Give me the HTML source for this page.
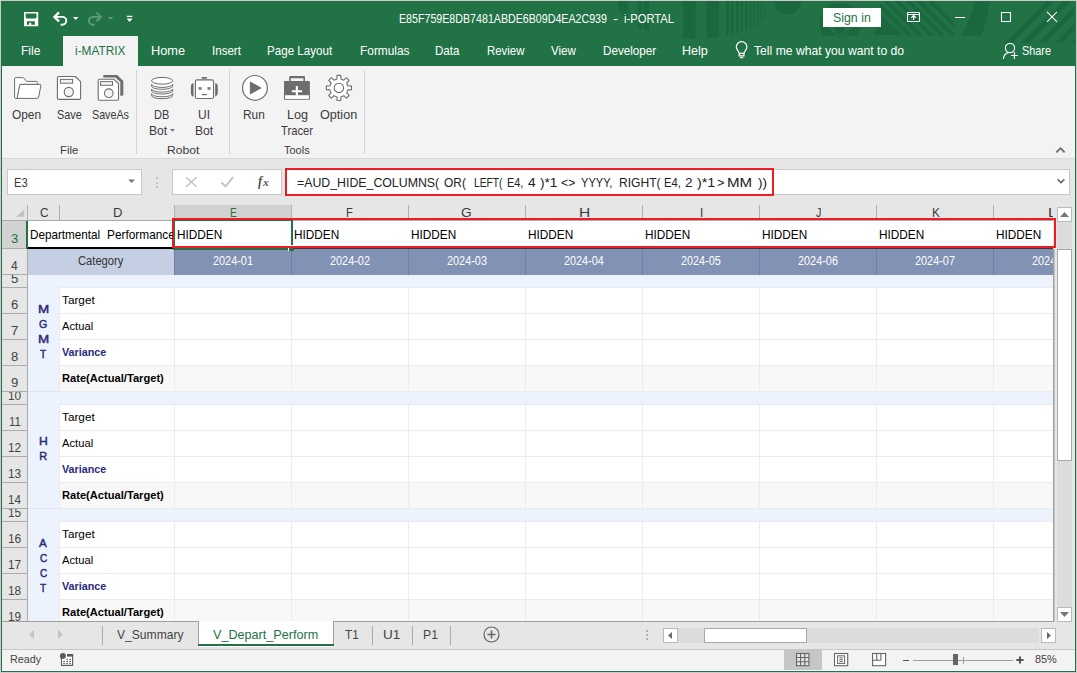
<!DOCTYPE html>
<html><head><meta charset="utf-8"><title>i-PORTAL</title>
<style>
html,body{margin:0;padding:0;}
body{width:1077px;height:673px;overflow:hidden;background:#cfcaca;font-family:"Liberation Sans", sans-serif;}
#w{position:absolute;left:0;top:0;width:1077px;height:673px;overflow:hidden;}
#w div{position:absolute;box-sizing:border-box;}
#w svg{position:absolute;overflow:visible;}
.t{position:absolute;white-space:pre;transform-origin:0 0;font-family:"Liberation Sans", sans-serif;}
</style></head><body><div id="w">
<div style="left:0px;top:0px;width:1077px;height:673px;background:#cfcaca;"></div>
<div style="left:1px;top:1px;width:1075px;height:671px;background:#217346;"></div>
<div style="left:2px;top:66px;width:1073px;height:92px;background:#f3f3f3;"></div>
<div style="left:2px;top:158px;width:1073px;height:464px;background:#e6e6e6;"></div>
<div style="left:2px;top:158px;width:1073px;height:1px;background:#d8d8d8;"></div>
<svg style="left:0;top:0" width="1077" height="46" viewBox="0 0 1077 46">
<defs><clipPath id="cpA"><ellipse cx="696" cy="1" rx="79" ry="38"/></clipPath>
<clipPath id="cpB"><rect x="2" y="1" width="1073" height="42"/></clipPath>
<clipPath id="cpE"><rect x="800" y="1" width="90" height="34.5"/></clipPath>
<clipPath id="cpC"><path d="M880 1H955V35.5H880Z"/></clipPath>
<clipPath id="cpD"><path d="M990 1H1075V43H990Z"/></clipPath></defs>
<g fill="#1b683e" clip-path="url(#cpB)">
<g clip-path="url(#cpA)"><rect x="618" y="0" width="9.5" height="44"/><rect x="637.7" y="0" width="4.099999999999909" height="44"/><rect x="643.5" y="0" width="5.5" height="44"/><rect x="683" y="0" width="12.5" height="44"/><rect x="706.3" y="0" width="12.600000000000023" height="44"/><rect x="726" y="0" width="3" height="44"/><rect x="731" y="0" width="2.7999999999999545" height="44"/><rect x="736" y="0" width="2.6000000000000227" height="44"/><rect x="740.7" y="0" width="2.2999999999999545" height="44"/><rect x="745.3" y="0" width="2.0" height="44"/><rect x="749.5" y="0" width="1.7000000000000455" height="44"/><rect x="753.3" y="0" width="1.7000000000000455" height="44"/><rect x="757" y="0" width="1.3999999999999773" height="44"/><rect x="760.5" y="0" width="1.1000000000000227" height="44"/><rect x="763.7" y="0" width="1.099999999999909" height="44"/></g>
<circle cx="787.5" cy="1" r="13.5"/>
<g clip-path="url(#cpE)"><circle cx="840" cy="23.5" r="16" fill="none" stroke="#1b683e" stroke-width="9"/>
<circle cx="840" cy="29" r="5"/></g>
<path d="M874 35L880 14L903 35Z"/>
<g clip-path="url(#cpC)"><path d="M871 0L915 44H921L877 0Z"/><path d="M882 0L926 44H932L888 0Z"/><path d="M893 0L937 44H943L899 0Z"/><path d="M904 0L948 44H954L910 0Z"/><path d="M915 0L959 44H965L921 0Z"/><path d="M926 0L970 44H976L932 0Z"/></g>
<path d="M974 1H989Q988 20 981 35.5H961Q972 18 974 1Z"/>
<g clip-path="url(#cpD)"><path d="M1003.7 44L1047.7 0H1055.0L1011.0 44Z"/><path d="M1020.4 44L1064.4 0H1071.7L1027.7 44Z"/><path d="M1037.1 44L1081.1 0H1088.4L1044.4 44Z"/><path d="M1053.8 44L1097.8 0H1105.1L1061.1 44Z"/><path d="M1070.5 44L1114.5 0H1121.8L1077.8 44Z"/></g>
</g></svg>
<div style="left:63px;top:36px;width:75px;height:31px;background:#f3f3f3;"></div>
<div style="left:823px;top:8px;width:58px;height:19px;background:#fff;"></div>
<div style="left:136px;top:70px;width:1px;height:84px;background:#d4d4d4;"></div>
<div style="left:229px;top:70px;width:1px;height:84px;background:#d4d4d4;"></div>
<div style="left:364px;top:70px;width:1px;height:84px;background:#d4d4d4;"></div>
<div style="left:7px;top:169px;width:135px;height:26px;background:#fff;border:1px solid #c8c8c8;"></div>
<div style="left:172px;top:169px;width:110px;height:26px;background:#fff;border:1px solid #c8c8c8;"></div>
<div style="left:286px;top:169px;width:784px;height:26px;background:#fff;border:1px solid #c8c8c8;"></div>
<div style="left:2px;top:205px;width:1052px;height:16px;background:#e6e6e6;"></div>
<div style="left:2px;top:220px;width:1052px;height:1px;background:#ababab;"></div>
<div style="left:27px;top:205px;width:1px;height:16px;background:#b0b0b0;"></div>
<div style="left:175px;top:205px;width:117px;height:15px;background:#d2d2d2;"></div>
<div style="left:175px;top:220px;width:117px;height:1px;background:#217346;"></div>
<div style="left:59px;top:205px;width:1px;height:15px;background:#b0b0b0;"></div>
<div style="left:174px;top:205px;width:1px;height:15px;background:#b0b0b0;"></div>
<div style="left:291px;top:205px;width:1px;height:15px;background:#b0b0b0;"></div>
<div style="left:408px;top:205px;width:1px;height:15px;background:#b0b0b0;"></div>
<div style="left:525px;top:205px;width:1px;height:15px;background:#b0b0b0;"></div>
<div style="left:642px;top:205px;width:1px;height:15px;background:#b0b0b0;"></div>
<div style="left:759px;top:205px;width:1px;height:15px;background:#b0b0b0;"></div>
<div style="left:876px;top:205px;width:1px;height:15px;background:#b0b0b0;"></div>
<div style="left:993px;top:205px;width:1px;height:15px;background:#b0b0b0;"></div>
<svg style="left:16px;top:209px" width="9" height="8" viewBox="0 0 9 8"><path d="M8.2 0.4V7.8H0.4Z" fill="#c2c2c2"/></svg>
<div style="left:2px;top:221px;width:26px;height:401px;background:#e6e6e6;"></div>
<div style="left:27px;top:221px;width:1px;height:401px;background:#ababab;"></div>
<div style="left:2px;top:221px;width:24px;height:27px;background:#d2d2d2;"></div>
<div style="left:2px;top:248px;width:24px;height:1px;background:#ababab;"></div>
<div style="left:26px;top:221px;width:2px;height:28px;background:#217346;"></div>
<div style="left:2px;top:274px;width:25px;height:1px;background:#ababab;"></div>
<div style="left:2px;top:287px;width:25px;height:1px;background:#ababab;"></div>
<div style="left:2px;top:313px;width:25px;height:1px;background:#ababab;"></div>
<div style="left:2px;top:339px;width:25px;height:1px;background:#ababab;"></div>
<div style="left:2px;top:365px;width:25px;height:1px;background:#ababab;"></div>
<div style="left:2px;top:391px;width:25px;height:1px;background:#ababab;"></div>
<div style="left:2px;top:404px;width:25px;height:1px;background:#ababab;"></div>
<div style="left:2px;top:430px;width:25px;height:1px;background:#ababab;"></div>
<div style="left:2px;top:456px;width:25px;height:1px;background:#ababab;"></div>
<div style="left:2px;top:482px;width:25px;height:1px;background:#ababab;"></div>
<div style="left:2px;top:508px;width:25px;height:1px;background:#ababab;"></div>
<div style="left:2px;top:521px;width:25px;height:1px;background:#ababab;"></div>
<div style="left:2px;top:547px;width:25px;height:1px;background:#ababab;"></div>
<div style="left:2px;top:573px;width:25px;height:1px;background:#ababab;"></div>
<div style="left:2px;top:599px;width:25px;height:1px;background:#ababab;"></div>
<div style="left:28px;top:221px;width:1025px;height:401px;background:#edf3fd;"></div>
<div style="left:28px;top:221px;width:1025px;height:26px;background:#fff;"></div>
<div style="left:28px;top:247px;width:147px;height:2px;background:#000;"></div>
<div style="left:28px;top:249px;width:147px;height:26px;background:#c5cfe3;"></div>
<div style="left:175px;top:249px;width:878px;height:26px;background:#8192b5;"></div>
<div style="left:174px;top:249px;width:1px;height:26px;background:#6e80a8;"></div>
<div style="left:291px;top:249px;width:1px;height:26px;background:#6e80a8;"></div>
<div style="left:408px;top:249px;width:1px;height:26px;background:#6e80a8;"></div>
<div style="left:525px;top:249px;width:1px;height:26px;background:#6e80a8;"></div>
<div style="left:642px;top:249px;width:1px;height:26px;background:#6e80a8;"></div>
<div style="left:759px;top:249px;width:1px;height:26px;background:#6e80a8;"></div>
<div style="left:876px;top:249px;width:1px;height:26px;background:#6e80a8;"></div>
<div style="left:993px;top:249px;width:1px;height:26px;background:#6e80a8;"></div>
<div style="left:60px;top:288px;width:993px;height:25px;background:#fff;"></div>
<div style="left:60px;top:313px;width:993px;height:1px;background:#ececec;"></div>
<div style="left:60px;top:314px;width:993px;height:25px;background:#fff;"></div>
<div style="left:60px;top:339px;width:993px;height:1px;background:#ececec;"></div>
<div style="left:60px;top:340px;width:993px;height:25px;background:#fff;"></div>
<div style="left:60px;top:365px;width:993px;height:1px;background:#ececec;"></div>
<div style="left:60px;top:366px;width:993px;height:25px;background:#f8f8f8;"></div>
<div style="left:60px;top:391px;width:993px;height:1px;background:#ececec;"></div>
<div style="left:59px;top:287px;width:1px;height:105px;background:#e6ebf3;"></div>
<div style="left:59px;top:287px;width:994px;height:1px;background:#e6ebf3;"></div>
<div style="left:174px;top:288px;width:1px;height:104px;background:#ececec;"></div>
<div style="left:291px;top:288px;width:1px;height:104px;background:#ececec;"></div>
<div style="left:408px;top:288px;width:1px;height:104px;background:#ececec;"></div>
<div style="left:525px;top:288px;width:1px;height:104px;background:#ececec;"></div>
<div style="left:642px;top:288px;width:1px;height:104px;background:#ececec;"></div>
<div style="left:759px;top:288px;width:1px;height:104px;background:#ececec;"></div>
<div style="left:876px;top:288px;width:1px;height:104px;background:#ececec;"></div>
<div style="left:993px;top:288px;width:1px;height:104px;background:#ececec;"></div>
<div style="left:60px;top:405px;width:993px;height:25px;background:#fff;"></div>
<div style="left:60px;top:430px;width:993px;height:1px;background:#ececec;"></div>
<div style="left:60px;top:431px;width:993px;height:25px;background:#fff;"></div>
<div style="left:60px;top:456px;width:993px;height:1px;background:#ececec;"></div>
<div style="left:60px;top:457px;width:993px;height:25px;background:#fff;"></div>
<div style="left:60px;top:482px;width:993px;height:1px;background:#ececec;"></div>
<div style="left:60px;top:483px;width:993px;height:25px;background:#f8f8f8;"></div>
<div style="left:60px;top:508px;width:993px;height:1px;background:#ececec;"></div>
<div style="left:59px;top:404px;width:1px;height:105px;background:#e6ebf3;"></div>
<div style="left:59px;top:404px;width:994px;height:1px;background:#e6ebf3;"></div>
<div style="left:174px;top:405px;width:1px;height:104px;background:#ececec;"></div>
<div style="left:291px;top:405px;width:1px;height:104px;background:#ececec;"></div>
<div style="left:408px;top:405px;width:1px;height:104px;background:#ececec;"></div>
<div style="left:525px;top:405px;width:1px;height:104px;background:#ececec;"></div>
<div style="left:642px;top:405px;width:1px;height:104px;background:#ececec;"></div>
<div style="left:759px;top:405px;width:1px;height:104px;background:#ececec;"></div>
<div style="left:876px;top:405px;width:1px;height:104px;background:#ececec;"></div>
<div style="left:993px;top:405px;width:1px;height:104px;background:#ececec;"></div>
<div style="left:60px;top:522px;width:993px;height:25px;background:#fff;"></div>
<div style="left:60px;top:547px;width:993px;height:1px;background:#ececec;"></div>
<div style="left:60px;top:548px;width:993px;height:25px;background:#fff;"></div>
<div style="left:60px;top:573px;width:993px;height:1px;background:#ececec;"></div>
<div style="left:60px;top:574px;width:993px;height:25px;background:#fff;"></div>
<div style="left:60px;top:599px;width:993px;height:1px;background:#ececec;"></div>
<div style="left:60px;top:600px;width:993px;height:21px;background:#f8f8f8;"></div>
<div style="left:59px;top:521px;width:1px;height:100px;background:#e6ebf3;"></div>
<div style="left:59px;top:521px;width:994px;height:1px;background:#e6ebf3;"></div>
<div style="left:174px;top:522px;width:1px;height:99px;background:#ececec;"></div>
<div style="left:291px;top:522px;width:1px;height:99px;background:#ececec;"></div>
<div style="left:408px;top:522px;width:1px;height:99px;background:#ececec;"></div>
<div style="left:525px;top:522px;width:1px;height:99px;background:#ececec;"></div>
<div style="left:642px;top:522px;width:1px;height:99px;background:#ececec;"></div>
<div style="left:759px;top:522px;width:1px;height:99px;background:#ececec;"></div>
<div style="left:876px;top:522px;width:1px;height:99px;background:#ececec;"></div>
<div style="left:993px;top:522px;width:1px;height:99px;background:#ececec;"></div>
<div style="left:28px;top:391px;width:31px;height:1px;background:#dbe7f8;"></div>
<div style="left:28px;top:508px;width:31px;height:1px;background:#dbe7f8;"></div>
<div style="left:294px;top:248px;width:759px;height:1px;background:#3a3a3a;"></div>
<div style="left:173px;top:219px;width:120px;height:31px;background:transparent;border:2px solid #217346;"></div>
<div style="left:291px;top:245px;width:2px;height:3px;background:#fff;"></div>
<div style="left:288px;top:247px;width:6px;height:4px;background:#fff;"></div>
<div style="left:289px;top:248px;width:5px;height:3px;background:#217346;"></div>
<div style="left:1053px;top:205px;width:22px;height:417px;background:#e6e6e6;"></div>
<div style="left:1053px;top:249px;width:1px;height:373px;background:#9f9f9f;"></div>
<div style="left:1054px;top:249px;width:1px;height:373px;background:#c4c4c4;"></div>
<div style="left:1057px;top:221px;width:15px;height:387px;background:#dcdcdc;"></div>
<div style="left:1057px;top:207px;width:15px;height:15px;background:#fff;border:1px solid #bababa;"></div>
<svg style="left:1060px;top:212px" width="9" height="5" viewBox="0 0 9 5"><path d="M0 5L4.5 0L9 5Z" fill="#777"/></svg>
<div style="left:1057px;top:249px;width:15px;height:212px;background:#fff;border:1px solid #a8a8a8;"></div>
<div style="left:1057px;top:607px;width:15px;height:15px;background:#fff;border:1px solid #bababa;"></div>
<svg style="left:1060px;top:612px" width="9" height="5" viewBox="0 0 9 5"><path d="M0 0L4.5 5L9 0Z" fill="#777"/></svg>
<div style="left:2px;top:621px;width:1052px;height:1px;background:#9f9f9f;"></div>
<div style="left:2px;top:622px;width:1073px;height:27px;background:#e6e6e6;"></div>
<div style="left:2px;top:649px;width:1073px;height:1px;background:#c6c6c6;"></div>
<div style="left:2px;top:650px;width:1073px;height:20px;background:#f3f3f3;"></div>
<div style="left:2px;top:670px;width:1073px;height:1px;background:#fff;"></div>
<svg style="left:29px;top:630px" width="5" height="9" viewBox="0 0 5 9"><path d="M5 0L0 4.5L5 9Z" fill="#c4c4c4"/></svg>
<svg style="left:58px;top:630px" width="5" height="9" viewBox="0 0 5 9"><path d="M0 0L5 4.5L0 9Z" fill="#c4c4c4"/></svg>
<div style="left:102px;top:626px;width:1px;height:19px;background:#ababab;"></div>
<div style="left:372px;top:626px;width:1px;height:19px;background:#ababab;"></div>
<div style="left:412px;top:626px;width:1px;height:19px;background:#ababab;"></div>
<div style="left:450px;top:626px;width:1px;height:19px;background:#ababab;"></div>
<div style="left:199px;top:621px;width:134px;height:26px;background:#fff;"></div>
<div style="left:198px;top:621px;width:1px;height:23px;background:#a0a0a0;"></div>
<div style="left:333px;top:621px;width:1px;height:23px;background:#a0a0a0;"></div>
<div style="left:198px;top:644px;width:136px;height:2px;background:#217346;"></div>
<svg style="left:483px;top:626px" width="17" height="17" viewBox="0 0 17 17"><circle cx="8.5" cy="8.5" r="7.5" fill="none" stroke="#666" stroke-width="1.2"/><path d="M8.5 4.5V12.5M4.5 8.5H12.5" stroke="#666" stroke-width="1.6"/></svg>
<div style="left:646px;top:630px;width:2px;height:2px;background:#b0b0b0;"></div>
<div style="left:646px;top:634px;width:2px;height:2px;background:#b0b0b0;"></div>
<div style="left:646px;top:638px;width:2px;height:2px;background:#b0b0b0;"></div>
<div style="left:678px;top:628px;width:361px;height:15px;background:#dcdcdc;"></div>
<div style="left:663px;top:628px;width:15px;height:15px;background:#fff;border:1px solid #bababa;"></div>
<svg style="left:668px;top:632px" width="4" height="7" viewBox="0 0 5 9"><path d="M5 0L0 4.5L5 9Z" fill="#666"/></svg>
<div style="left:1041px;top:628px;width:15px;height:15px;background:#fff;border:1px solid #bababa;"></div>
<svg style="left:1047px;top:632px" width="4" height="7" viewBox="0 0 5 9"><path d="M0 0L5 4.5L0 9Z" fill="#666"/></svg>
<div style="left:704px;top:628px;width:103px;height:15px;background:#fff;border:1px solid #a8a8a8;"></div>
<div style="left:784px;top:650px;width:38px;height:20px;background:#c6c6c6;"></div>
<div style="left:172px;top:218px;width:884px;height:30px;background:transparent;border:2px solid #ee1c25;"></div>
<div style="left:285px;top:168px;width:489px;height:28px;background:transparent;border:2px solid #ee1c25;"></div>
<svg style="left:20px;top:8px" width="120" height="22" viewBox="20 8 120 22">
<path fill="#fff" fill-rule="evenodd" d="M24 12H38.2V26.2H24Z M25.7 13.6V17.6L26.6 18.5H35.6L36.5 17.6V13.6Z M27 21.2V24.8H29.2V22.8H31.2V24.8H34.8V21.2Z"/>
<path fill="none" stroke="#fff" stroke-width="2.3" stroke-linejoin="miter" d="M59 12.4L54.4 16.9L59 21.4"/>
<path fill="none" stroke="#fff" stroke-width="1.9" d="M54.6 16.9H62.2A4.1 3.9 0 0 1 62.2 24.7H60.6"/>
<path fill="#fff" d="M73 16.9H78.4L75.7 19.9Z"/>
<path fill="none" stroke="#5f9c7b" stroke-width="1.9" d="M96.4 12.6L100.9 16.9L96.4 21.2"/>
<path fill="none" stroke="#5f9c7b" stroke-width="1.9" d="M100.6 16.9H93A4.1 3.9 0 0 0 93 24.7H94.6"/>
<path fill="#5f9c7b" d="M107.8 16.9H113.2L110.5 19.9Z"/>
<path fill="#fff" d="M126.8 15.7H132.4V17H126.8Z M126.6 18.6H132.6L129.6 21.9Z"/>
</svg>
<svg style="left:900px;top:8px" width="165" height="18" viewBox="900 8 165 18">
<path fill="none" stroke="#fff" stroke-width="1" d="M907.5 12.5H919.5V21.5H907.5Z M907.5 14.5H919.5"/>
<path fill="none" stroke="#fff" stroke-width="1.2" d="M913.6 20V15.6 M911.3 17.7L913.6 15.5L915.9 17.7"/>
<path fill="none" stroke="#fff" stroke-width="1" d="M955 17.5H965"/>
<path fill="none" stroke="#fff" stroke-width="1.1" d="M1001.5 12.5H1010.5V21.5H1001.5Z"/>
<path fill="none" stroke="#fff" stroke-width="1.1" d="M1047 11.8L1057 21.8M1057 11.8L1047 21.8"/>
</svg>
<svg style="left:733px;top:40px" width="16" height="20" viewBox="733 40 16 20">
<path fill="none" stroke="#fff" stroke-width="1.2" d="M739.2 53.4C739.2 51.4 736.3 50 736.3 47A5.3 5.3 0 0 1 746.9 47C746.9 50 744 51.4 744 53.4Z M739.2 53.4V55.8H744V53.4 M740 57.6H743.2"/>
</svg>
<svg style="left:1001px;top:41px" width="18" height="20" viewBox="1001 41 18 20">
<circle cx="1010" cy="48" r="4.6" fill="none" stroke="#fff" stroke-width="1.2"/>
<path fill="none" stroke="#fff" stroke-width="1.2" d="M1003.4 59C1003.6 55.6 1005.6 53.3 1008.3 52.6"/>
<path fill="none" stroke="#fff" stroke-width="1.2" d="M1011 55.5H1017.8 M1014.4 52.1V58.9"/>
</svg>
<svg style="left:10px;top:72px" width="350" height="32" viewBox="10 72 350 32">
<!-- open folder -->
<path fill="#fff" stroke="#6d6d6d" stroke-width="1" stroke-linejoin="round" d="M14.6 97.2V78.8Q14.6 77.6 15.8 77.6H22.6Q23.3 77.6 23.8 78.1L26.6 81.4H36.2Q37.4 81.4 37.4 82.6V84.4H19.9L17.2 98.4H15.8Q14.6 98.4 14.6 97.2Z"/>
<path fill="#fff" stroke="#6d6d6d" stroke-width="1" stroke-linejoin="round" d="M17.2 98.4L19.6 85.6Q19.9 84.4 21 84.4H40Q41.1 84.4 40.9 85.6L38.6 97.2Q38.3 98.4 37.2 98.4Z"/>
<!-- save -->
<path fill="#fff" stroke="#6d6d6d" stroke-width="1.1" stroke-linejoin="round" d="M58.6 76.5H75.3L80.6 81.6V98.2Q80.6 99.4 79.4 99.4H58.6Q57.4 99.4 57.4 98.2V77.7Q57.4 76.5 58.6 76.5Z"/>
<rect x="60.4" y="79.4" width="12.2" height="3.8" fill="#f3f3f3" stroke="#6d6d6d" stroke-width="1"/>
<circle cx="68.8" cy="92" r="4.6" fill="#f3f3f3" stroke="#6d6d6d" stroke-width="1.1"/>
<!-- save as -->
<path fill="#6d6d6d" d="M103.3 75H117.2L123.3 80.9V94.6Q123.3 95.8 122.1 95.8H120.3V82L115.4 77.6H103.3Z"/>
<path fill="#fff" stroke="#6d6d6d" stroke-width="1.1" stroke-linejoin="round" d="M99.4 79.3H113.9L118.5 83.5V99.1Q118.5 100.3 117.3 100.3H99.4Q98.2 100.3 98.2 99.1V80.5Q98.2 79.3 99.4 79.3Z"/>
<rect x="100.5" y="81.6" width="12" height="3.7" fill="#f3f3f3" stroke="#6d6d6d" stroke-width="1"/>
<circle cx="108.8" cy="93.2" r="4.3" fill="#f3f3f3" stroke="#6d6d6d" stroke-width="1.1"/>
<!-- DB -->
<g fill="none" stroke="#6d6d6d" stroke-width="1">
<path fill="#fff" d="M151.6 80.8V95.6A10.5 3.1 0 0 0 172.6 95.6V80.8Z" stroke="none"/>
<path d="M151.6 84.3A10.5 3.1 0 0 0 172.6 84.3"/>
<path d="M151.6 86.2A10.5 3.1 0 0 0 172.6 86.2"/>
<path d="M151.6 89A10.5 3.1 0 0 0 172.6 89"/>
<path d="M151.6 90.9A10.5 3.1 0 0 0 172.6 90.9"/>
<path d="M151.6 93.7A10.5 3.1 0 0 0 172.6 93.7"/>
<path d="M151.6 95.6A10.5 3.1 0 0 0 172.6 95.6"/>
<path d="M151.6 84.3V86.2M172.6 84.3V86.2M151.6 89V90.9M172.6 89V90.9M151.6 93.7V95.6M172.6 93.7V95.6"/>
<ellipse cx="162.1" cy="80.8" rx="10.5" ry="3.4" fill="#fff"/>
</g>
<!-- UI bot -->
<rect x="195.4" y="79.9" width="18.1" height="18.6" rx="1.6" fill="#fff" stroke="#6d6d6d" stroke-width="1.1"/>
<rect x="201.7" y="77" width="5.2" height="1.8" rx="0.4" fill="#6d6d6d"/>
<path fill="#6d6d6d" d="M193.5 83V96.7Q190.9 96 190.9 93V86.7Q190.9 83.7 193.5 83Z M215.2 83V96.7Q217.8 96 217.8 93V86.7Q217.8 83.7 215.2 83Z"/>
<rect x="198.6" y="87.1" width="3" height="2.7" fill="#7a7a7a"/>
<rect x="207.5" y="87.1" width="3" height="2.7" fill="#7a7a7a"/>
<rect x="201.8" y="94" width="5" height="1.2" fill="#6d6d6d"/>
<!-- run -->
<circle cx="254.95" cy="87.9" r="12.4" fill="#fff" stroke="#6d6d6d" stroke-width="1.2"/>
<path fill="#6d6d6d" d="M249.9 82.3Q249.9 81.3 250.8 81.8L261 87.4Q261.8 87.9 261 88.4L250.8 94Q249.9 94.5 249.9 93.5Z"/>
<!-- log tracer -->
<path fill="#6d6d6d" d="M289.2 81.2V77Q289.2 76 290.2 76H304Q305 76 305 77V81.2H303.4V78.2H290.8V81.2Z"/>
<path fill="#6d6d6d" d="M285 81.1H308.9Q309.9 81.1 309.9 82.1V99.8H284V82.1Q284 81.1 285 81.1Z"/>
<rect x="285" y="95.2" width="23.9" height="3.7" fill="#fff"/>
<path fill="#fff" d="M295.8 86.1H297.9V90.2H302.1V92.3H297.9V95.2H295.8V92.3H291.9V90.2H295.8Z"/>
<!-- gear -->
<path fill="#fff" stroke="#6d6d6d" stroke-width="1.1" stroke-linejoin="round" d="M336.94 78.91 L337.06 75.33 L340.74 75.33 L340.86 78.91 L343.87 80.16 L346.49 77.72 L349.08 80.31 L346.64 82.93 L347.89 85.94 L351.47 86.06 L351.47 89.74 L347.89 89.86 L346.64 92.87 L349.08 95.49 L346.49 98.08 L343.87 95.64 L340.86 96.89 L340.74 100.47 L337.06 100.47 L336.94 96.89 L333.93 95.64 L331.31 98.08 L328.72 95.49 L331.16 92.87 L329.91 89.86 L326.33 89.74 L326.33 86.06 L329.91 85.94 L331.16 82.93 L328.72 80.31 L331.31 77.72 L333.93 80.16Z"/>
<circle cx="338.9" cy="87.9" r="4.7" fill="#fff" stroke="#6d6d6d" stroke-width="1.1"/>
</svg>
<svg style="left:169px;top:128px" width="8" height="6" viewBox="169 128 8 6"><path fill="#777" d="M170 129H175L172.5 131.8Z"/></svg>
<svg style="left:1054px;top:145px" width="14" height="10" viewBox="1054 145 14 10"><path fill="none" stroke="#666" stroke-width="1.8" d="M1056.4 152.4L1060.5 148.2L1064.6 152.4"/></svg>
<svg style="left:125px;top:174px" width="150" height="16" viewBox="125 174 150 16">
<path fill="#777" d="M128.2 179.4H135L131.6 183Z"/>
<path fill="none" stroke="#c4c4c4" stroke-width="1.5" d="M186 177.2L196.6 186.8M196.6 177.2L186 186.8"/>
<path fill="none" stroke="#c4c4c4" stroke-width="2" d="M221.4 182.6L225.6 186.4L233.2 177.2"/>
</svg>
<div style="left:156px;top:177px;width:2px;height:2px;background:#c2c2c2;"></div>
<div style="left:156px;top:181.5px;width:2px;height:2px;background:#c2c2c2;"></div>
<div style="left:156px;top:186px;width:2px;height:2px;background:#c2c2c2;"></div>
<svg style="left:1055px;top:176px" width="12" height="10" viewBox="1055 176 12 10"><path fill="none" stroke="#666" stroke-width="1.6" d="M1057.6 179.2L1061 182.6L1064.4 179.2"/></svg>
<svg style="left:58px;top:652px" width="18" height="16" viewBox="58 652 18 16">
<rect x="61" y="654" width="12" height="12" fill="#fff"/>
<path fill="none" stroke="#5a5a5a" stroke-width="1.1" d="M61.5 658V665.4H72.6V654.6"/>
<rect x="67" y="654" width="6.1" height="2.6" fill="#5a5a5a"/>
<circle cx="62.9" cy="656" r="3" fill="#5a5a5a"/>
<path stroke="#5a5a5a" stroke-width="1" d="M66.2 659.4H68M69.2 659.4H71 M63.2 661.4H65M66.2 661.4H68M69.2 661.4H71 M63.2 663.4H65M66.2 663.4H68M69.2 663.4H71"/>
</svg>
<svg style="left:790px;top:651px" width="100" height="18" viewBox="790 651 100 18">
<rect x="796.5" y="653.5" width="12.4" height="12.2" fill="#e4e4e4" stroke="#666" stroke-width="1.1"/>
<path stroke="#666" stroke-width="1.1" d="M800.6 653.5V665.7M804.8 653.5V665.7M796.5 657.5H808.9M796.5 661.7H808.9"/>
<rect x="834.5" y="653.5" width="13.2" height="12.2" fill="#fff" stroke="#666" stroke-width="1.1"/>
<rect x="837.6" y="655.8" width="7" height="7.6" fill="#fff" stroke="#666" stroke-width="1"/>
<path stroke="#666" stroke-width="1" d="M839.4 657.8H842.8M839.4 659.7H842.8M839.4 661.6H842.8"/>
<rect x="872.6" y="653.5" width="13" height="12.2" fill="#fff" stroke="#666" stroke-width="1.1"/>
<path fill="none" stroke="#666" stroke-width="1.1" d="M876.7 653.5V660.2M880.9 653.5V660.2M872.6 660.2H880.9"/>
</svg>
<div style="left:903px;top:659.5px;width:6px;height:1.6px;background:#555;"></div>
<div style="left:913px;top:660px;width:100px;height:1px;background:#a0a0a0;"></div>
<div style="left:963px;top:657px;width:1px;height:7px;background:#a0a0a0;"></div>
<div style="left:953.2px;top:653.6px;width:4.8px;height:11.2px;background:#666;"></div>
<svg style="left:1015px;top:655px" width="10" height="10" viewBox="1015 655 10 10"><path stroke="#555" stroke-width="2" d="M1016.3 660H1023.6M1020 656.4V663.6"/></svg>
<span class="t" style="left:399.33px;top:13.00px;font-size:12.2px;line-height:12.2px;color:#fff;transform:scaleX(0.8745);">E85F759E8DB7481ABDE6B09D4EA2C939</span>
<span class="t" style="left:612.98px;top:13.00px;font-size:12.2px;line-height:12.2px;color:#fff;transform:scaleX(1.2333);">-</span>
<span class="t" style="left:624.11px;top:13.00px;font-size:12.2px;line-height:12.2px;color:#fff;transform:scaleX(0.9183);">i-PORTAL</span>
<span class="t" style="left:833.49px;top:12.00px;font-size:12.2px;line-height:12.2px;color:#217346;transform:scaleX(1.0139);">Sign in</span>
<span class="t" style="left:21.21px;top:45.00px;font-size:12.2px;line-height:12.2px;color:#fff;transform:scaleX(0.9863);">File</span>
<span class="t" style="left:74.57px;top:45.00px;font-size:12.2px;line-height:12.2px;color:#217346;transform:scaleX(0.9714);">i-MATRIX</span>
<span class="t" style="left:151.45px;top:45.00px;font-size:12.2px;line-height:12.2px;color:#fff;transform:scaleX(1.0484);">Home</span>
<span class="t" style="left:211.75px;top:45.00px;font-size:12.2px;line-height:12.2px;color:#fff;transform:scaleX(0.9492);">Insert</span>
<span class="t" style="left:267.45px;top:45.00px;font-size:12.2px;line-height:12.2px;color:#fff;transform:scaleX(0.9526);">Page Layout</span>
<span class="t" style="left:359.92px;top:45.00px;font-size:12.2px;line-height:12.2px;color:#fff;transform:scaleX(0.9758);">Formulas</span>
<span class="t" style="left:435.35px;top:45.00px;font-size:12.2px;line-height:12.2px;color:#fff;transform:scaleX(0.9495);">Data</span>
<span class="t" style="left:486.56px;top:45.00px;font-size:12.2px;line-height:12.2px;color:#fff;transform:scaleX(0.9359);">Review</span>
<span class="t" style="left:550.90px;top:45.00px;font-size:12.2px;line-height:12.2px;color:#fff;transform:scaleX(0.9524);">View</span>
<span class="t" style="left:602.64px;top:45.00px;font-size:12.2px;line-height:12.2px;color:#fff;transform:scaleX(0.9578);">Developer</span>
<span class="t" style="left:682.47px;top:45.00px;font-size:12.2px;line-height:12.2px;color:#fff;transform:scaleX(1.0316);">Help</span>
<span class="t" style="left:753.75px;top:45.00px;font-size:12.2px;line-height:12.2px;color:#fff;transform:scaleX(0.9983);">Tell me what you want to do</span>
<span class="t" style="left:1022.26px;top:45.00px;font-size:12.2px;line-height:12.2px;color:#fff;transform:scaleX(0.8889);">Share</span>
<span class="t" style="left:12.21px;top:109.00px;font-size:12.2px;line-height:12.2px;color:#3a3a3a;transform:scaleX(0.9754);">Open</span>
<span class="t" style="left:56.85px;top:109.00px;font-size:12.2px;line-height:12.2px;color:#3a3a3a;transform:scaleX(0.8935);">Save</span>
<span class="t" style="left:91.96px;top:109.00px;font-size:12.2px;line-height:12.2px;color:#3a3a3a;transform:scaleX(0.8800);">SaveAs</span>
<span class="t" style="left:153.70px;top:109.00px;font-size:12.2px;line-height:12.2px;color:#3a3a3a;transform:scaleX(0.8984);">DB</span>
<span class="t" style="left:148.71px;top:125.00px;font-size:12.2px;line-height:12.2px;color:#3a3a3a;transform:scaleX(0.9913);">Bot</span>
<span class="t" style="left:197.51px;top:109.00px;font-size:12.2px;line-height:12.2px;color:#3a3a3a;transform:scaleX(0.9854);">UI</span>
<span class="t" style="left:194.70px;top:125.00px;font-size:12.2px;line-height:12.2px;color:#3a3a3a;transform:scaleX(0.9971);">Bot</span>
<span class="t" style="left:243.42px;top:109.00px;font-size:12.2px;line-height:12.2px;color:#3a3a3a;transform:scaleX(0.9756);">Run</span>
<span class="t" style="left:286.67px;top:109.00px;font-size:12.2px;line-height:12.2px;color:#3a3a3a;transform:scaleX(1.0324);">Log</span>
<span class="t" style="left:281.47px;top:125.00px;font-size:12.2px;line-height:12.2px;color:#3a3a3a;transform:scaleX(0.9197);">Tracer</span>
<span class="t" style="left:319.98px;top:109.00px;font-size:12.2px;line-height:12.2px;color:#3a3a3a;transform:scaleX(1.0360);">Option</span>
<span class="t" style="left:59.71px;top:145.00px;font-size:10.8px;line-height:10.8px;color:#3a3a3a;transform:scaleX(1.0523);">File</span>
<span class="t" style="left:166.86px;top:145.00px;font-size:10.8px;line-height:10.8px;color:#3a3a3a;transform:scaleX(1.1250);">Robot</span>
<span class="t" style="left:284.25px;top:145.00px;font-size:10.8px;line-height:10.8px;color:#3a3a3a;transform:scaleX(1.0182);">Tools</span>
<span class="t" style="left:13.68px;top:177.00px;font-size:12.2px;line-height:12.2px;color:#3a3a3a;transform:scaleX(0.9185);">E3</span>
<span class="t" style="left:297.09px;top:177.00px;font-size:12.2px;line-height:12.2px;color:#222;transform:scaleX(1.0114);">=AUD_HIDE_COLUMNS(</span>
<span class="t" style="left:443.71px;top:177.00px;font-size:12.2px;line-height:12.2px;color:#222;transform:scaleX(0.9793);">OR(</span>
<span class="t" style="left:473.56px;top:177.00px;font-size:12.2px;line-height:12.2px;color:#222;transform:scaleX(0.8397);">LEFT(</span>
<span class="t" style="left:506.51px;top:177.00px;font-size:12.2px;line-height:12.2px;color:#222;transform:scaleX(0.8923);">E4,</span>
<span class="t" style="left:527.92px;top:177.00px;font-size:12.2px;line-height:12.2px;color:#222;transform:scaleX(1.1200);">4</span>
<span class="t" style="left:540.20px;top:177.00px;font-size:12.2px;line-height:12.2px;color:#222;transform:scaleX(1.1200);">)*1</span>
<span class="t" style="left:560.80px;top:177.00px;font-size:12.2px;line-height:12.2px;color:#222;transform:scaleX(1.0038);">&lt;&gt;</span>
<span class="t" style="left:581.27px;top:177.00px;font-size:12.2px;line-height:12.2px;color:#222;transform:scaleX(0.9091);">YYYY,</span>
<span class="t" style="left:618.81px;top:177.00px;font-size:12.2px;line-height:12.2px;color:#222;transform:scaleX(0.9902);">RIGHT(</span>
<span class="t" style="left:664.48px;top:177.00px;font-size:12.2px;line-height:12.2px;color:#222;transform:scaleX(0.9231);">E4,</span>
<span class="t" style="left:685.44px;top:177.00px;font-size:12.2px;line-height:12.2px;color:#222;transform:scaleX(1.1130);">2</span>
<span class="t" style="left:696.70px;top:177.00px;font-size:12.2px;line-height:12.2px;color:#222;transform:scaleX(1.1733);">)*1</span>
<span class="t" style="left:717.48px;top:177.00px;font-size:12.2px;line-height:12.2px;color:#222;transform:scaleX(1.0500);">&gt;</span>
<span class="t" style="left:726.76px;top:177.00px;font-size:12.2px;line-height:12.2px;color:#222;transform:scaleX(1.2384);">MM</span>
<span class="t" style="left:757.60px;top:177.00px;font-size:12.2px;line-height:12.2px;color:#222;transform:scaleX(1.1200);">))</span>
<span class="t" style="left:39.92px;top:207.00px;font-size:12.2px;line-height:12.2px;color:#3a3a3a;transform:scaleX(0.9677);">C</span>
<span class="t" style="left:112.72px;top:207.00px;font-size:12.2px;line-height:12.2px;color:#3a3a3a;transform:scaleX(1.0759);">D</span>
<span class="t" style="left:229.77px;top:207.00px;font-size:12.2px;line-height:12.2px;color:#217346;transform:scaleX(0.8296);">E</span>
<span class="t" style="left:345.98px;top:207.00px;font-size:12.2px;line-height:12.2px;color:#3a3a3a;transform:scaleX(0.9167);">F</span>
<span class="t" style="left:461.44px;top:207.00px;font-size:12.2px;line-height:12.2px;color:#3a3a3a;transform:scaleX(1.1273);">G</span>
<span class="t" style="left:578.83px;top:207.00px;font-size:12.2px;line-height:12.2px;color:#3a3a3a;transform:scaleX(1.2714);">H</span>
<span class="t" style="left:699.94px;top:207.00px;font-size:12.2px;line-height:12.2px;color:#3a3a3a;transform:scaleX(0.9600);">I</span>
<span class="t" style="left:816.28px;top:207.00px;font-size:12.2px;line-height:12.2px;color:#3a3a3a;transform:scaleX(0.8800);">J</span>
<span class="t" style="left:931.73px;top:207.00px;font-size:12.2px;line-height:12.2px;color:#3a3a3a;transform:scaleX(0.9714);">K</span>
<div style="left:994px;top:205.00px;width:59px;height:18.20px;overflow:hidden"><span class="t" style="left:53.73px;top:2.00px;font-size:12.2px;line-height:12.2px;color:#3a3a3a;transform:scaleX(1.2727);">L</span></div>
<span class="t" style="left:10.86px;top:233.00px;font-size:12.2px;line-height:12.2px;color:#217346;transform:scaleX(1.0783);">3</span>
<span class="t" style="left:11.15px;top:260.00px;font-size:12.2px;line-height:12.2px;color:#444;transform:scaleX(0.9920);">4</span>
<div style="left:2px;top:275.00px;width:25px;height:12.00px;overflow:hidden"><span class="t" style="left:8.86px;top:-2.00px;font-size:12.2px;line-height:12.2px;color:#444;transform:scaleX(1.0783);">5</span></div>
<span class="t" style="left:10.86px;top:299.00px;font-size:12.2px;line-height:12.2px;color:#444;transform:scaleX(1.0783);">6</span>
<span class="t" style="left:10.86px;top:325.00px;font-size:12.2px;line-height:12.2px;color:#444;transform:scaleX(1.0783);">7</span>
<span class="t" style="left:10.86px;top:351.00px;font-size:12.2px;line-height:12.2px;color:#444;transform:scaleX(1.0783);">8</span>
<span class="t" style="left:10.86px;top:377.00px;font-size:12.2px;line-height:12.2px;color:#444;transform:scaleX(1.0783);">9</span>
<div style="left:2px;top:392.00px;width:25px;height:12.00px;overflow:hidden"><span class="t" style="left:6.27px;top:-2.00px;font-size:12.2px;line-height:12.2px;color:#444;transform:scaleX(0.9714);">10</span></div>
<span class="t" style="left:8.70px;top:416.00px;font-size:12.2px;line-height:12.2px;color:#444;transform:scaleX(0.9391);">11</span>
<span class="t" style="left:8.27px;top:442.00px;font-size:12.2px;line-height:12.2px;color:#444;transform:scaleX(0.9714);">12</span>
<span class="t" style="left:8.27px;top:468.00px;font-size:12.2px;line-height:12.2px;color:#444;transform:scaleX(0.9714);">13</span>
<span class="t" style="left:8.29px;top:494.00px;font-size:12.2px;line-height:12.2px;color:#444;transform:scaleX(0.9520);">14</span>
<div style="left:2px;top:509.00px;width:25px;height:12.00px;overflow:hidden"><span class="t" style="left:6.27px;top:-2.00px;font-size:12.2px;line-height:12.2px;color:#444;transform:scaleX(0.9714);">15</span></div>
<span class="t" style="left:8.27px;top:533.00px;font-size:12.2px;line-height:12.2px;color:#444;transform:scaleX(0.9714);">16</span>
<span class="t" style="left:8.27px;top:559.00px;font-size:12.2px;line-height:12.2px;color:#444;transform:scaleX(0.9714);">17</span>
<span class="t" style="left:8.27px;top:585.00px;font-size:12.2px;line-height:12.2px;color:#444;transform:scaleX(0.9714);">18</span>
<div style="left:2px;top:600.00px;width:25px;height:21.00px;overflow:hidden"><span class="t" style="left:6.27px;top:11.00px;font-size:12.2px;line-height:12.2px;color:#444;transform:scaleX(0.9714);">19</span></div>
<span class="t" style="left:29.94px;top:229.00px;font-size:12.2px;line-height:12.2px;color:#000;transform:scaleX(0.9594);">Departmental</span>
<div style="left:100px;top:227.00px;width:73px;height:18.20px;overflow:hidden"><span class="t" style="left:7.23px;top:2.00px;font-size:12.2px;line-height:12.2px;color:#000;transform:scaleX(0.9729);">Performance</span></div>
<div style="left:28px;top:227.00px;width:1025px;height:18.20px;overflow:hidden"><span class="t" style="left:148.83px;top:2.00px;font-size:12.2px;line-height:12.2px;color:#000;transform:scaleX(0.9676);">HIDDEN</span></div>
<div style="left:28px;top:227.00px;width:1025px;height:18.20px;overflow:hidden"><span class="t" style="left:265.83px;top:2.00px;font-size:12.2px;line-height:12.2px;color:#000;transform:scaleX(0.9676);">HIDDEN</span></div>
<div style="left:28px;top:227.00px;width:1025px;height:18.20px;overflow:hidden"><span class="t" style="left:382.83px;top:2.00px;font-size:12.2px;line-height:12.2px;color:#000;transform:scaleX(0.9676);">HIDDEN</span></div>
<div style="left:28px;top:227.00px;width:1025px;height:18.20px;overflow:hidden"><span class="t" style="left:499.83px;top:2.00px;font-size:12.2px;line-height:12.2px;color:#000;transform:scaleX(0.9676);">HIDDEN</span></div>
<div style="left:28px;top:227.00px;width:1025px;height:18.20px;overflow:hidden"><span class="t" style="left:616.83px;top:2.00px;font-size:12.2px;line-height:12.2px;color:#000;transform:scaleX(0.9676);">HIDDEN</span></div>
<div style="left:28px;top:227.00px;width:1025px;height:18.20px;overflow:hidden"><span class="t" style="left:733.83px;top:2.00px;font-size:12.2px;line-height:12.2px;color:#000;transform:scaleX(0.9676);">HIDDEN</span></div>
<div style="left:28px;top:227.00px;width:1025px;height:18.20px;overflow:hidden"><span class="t" style="left:850.83px;top:2.00px;font-size:12.2px;line-height:12.2px;color:#000;transform:scaleX(0.9676);">HIDDEN</span></div>
<div style="left:28px;top:227.00px;width:1025px;height:18.20px;overflow:hidden"><span class="t" style="left:967.83px;top:2.00px;font-size:12.2px;line-height:12.2px;color:#000;transform:scaleX(0.9676);">HIDDEN</span></div>
<span class="t" style="left:78.13px;top:255.00px;font-size:12px;line-height:12px;color:#333;transform:scaleX(0.9306);">Category</span>
<div style="left:28px;top:253.00px;width:1025px;height:18.00px;overflow:hidden"><span class="t" style="left:185.35px;top:2.00px;font-size:12px;line-height:12px;color:#fff;transform:scaleX(0.9070);">2024-01</span></div>
<div style="left:28px;top:253.00px;width:1025px;height:18.00px;overflow:hidden"><span class="t" style="left:302.35px;top:2.00px;font-size:12px;line-height:12px;color:#fff;transform:scaleX(0.9070);">2024-02</span></div>
<div style="left:28px;top:253.00px;width:1025px;height:18.00px;overflow:hidden"><span class="t" style="left:419.35px;top:2.00px;font-size:12px;line-height:12px;color:#fff;transform:scaleX(0.9070);">2024-03</span></div>
<div style="left:28px;top:253.00px;width:1025px;height:18.00px;overflow:hidden"><span class="t" style="left:536.35px;top:2.00px;font-size:12px;line-height:12px;color:#fff;transform:scaleX(0.9017);">2024-04</span></div>
<div style="left:28px;top:253.00px;width:1025px;height:18.00px;overflow:hidden"><span class="t" style="left:653.35px;top:2.00px;font-size:12px;line-height:12px;color:#fff;transform:scaleX(0.9017);">2024-05</span></div>
<div style="left:28px;top:253.00px;width:1025px;height:18.00px;overflow:hidden"><span class="t" style="left:770.35px;top:2.00px;font-size:12px;line-height:12px;color:#fff;transform:scaleX(0.9070);">2024-06</span></div>
<div style="left:28px;top:253.00px;width:1025px;height:18.00px;overflow:hidden"><span class="t" style="left:887.35px;top:2.00px;font-size:12px;line-height:12px;color:#fff;transform:scaleX(0.9070);">2024-07</span></div>
<div style="left:28px;top:253.00px;width:1025px;height:18.00px;overflow:hidden"><span class="t" style="left:1004.35px;top:2.00px;font-size:12px;line-height:12px;color:#fff;transform:scaleX(0.9070);">2024-08</span></div>
<span class="t" style="left:62.35px;top:295.00px;font-size:11.8px;line-height:11.8px;color:#000;transform:scaleX(0.9969);">Target</span>
<span class="t" style="left:61.90px;top:321.00px;font-size:11.8px;line-height:11.8px;color:#000;transform:scaleX(0.9500);">Actual</span>
<span class="t" style="left:62.20px;top:347.00px;font-size:11.8px;line-height:11.8px;color:#2a2a7c;font-weight:bold;transform:scaleX(0.9098);">Variance</span>
<span class="t" style="left:61.79px;top:373.00px;font-size:11.8px;line-height:11.8px;color:#000;font-weight:bold;transform:scaleX(0.9433);">Rate(Actual/Target)</span>
<span class="t" style="left:62.35px;top:412.00px;font-size:11.8px;line-height:11.8px;color:#000;transform:scaleX(0.9969);">Target</span>
<span class="t" style="left:61.90px;top:438.00px;font-size:11.8px;line-height:11.8px;color:#000;transform:scaleX(0.9500);">Actual</span>
<span class="t" style="left:62.20px;top:464.00px;font-size:11.8px;line-height:11.8px;color:#2a2a7c;font-weight:bold;transform:scaleX(0.9098);">Variance</span>
<span class="t" style="left:61.79px;top:490.00px;font-size:11.8px;line-height:11.8px;color:#000;font-weight:bold;transform:scaleX(0.9433);">Rate(Actual/Target)</span>
<span class="t" style="left:62.35px;top:529.00px;font-size:11.8px;line-height:11.8px;color:#000;transform:scaleX(0.9969);">Target</span>
<span class="t" style="left:61.90px;top:555.00px;font-size:11.8px;line-height:11.8px;color:#000;transform:scaleX(0.9500);">Actual</span>
<span class="t" style="left:62.20px;top:581.00px;font-size:11.8px;line-height:11.8px;color:#2a2a7c;font-weight:bold;transform:scaleX(0.9098);">Variance</span>
<div style="left:60px;top:600.00px;width:114px;height:21.00px;overflow:hidden"><span class="t" style="left:1.79px;top:7.00px;font-size:11.8px;line-height:11.8px;color:#000;font-weight:bold;transform:scaleX(0.9433);">Rate(Actual/Target)</span></div>
<span class="t" style="left:37.84px;top:304.00px;font-size:11px;line-height:11px;color:#2a2a7c;transform:scaleX(1.2194);-webkit-text-stroke:0.45px #2a2a7c;">M</span>
<span class="t" style="left:39.26px;top:319.00px;font-size:11px;line-height:11px;color:#2a2a7c;transform:scaleX(0.9677);-webkit-text-stroke:0.45px #2a2a7c;">G</span>
<span class="t" style="left:37.84px;top:334.00px;font-size:11px;line-height:11px;color:#2a2a7c;transform:scaleX(1.2194);-webkit-text-stroke:0.45px #2a2a7c;">M</span>
<span class="t" style="left:39.90px;top:349.00px;font-size:11px;line-height:11px;color:#2a2a7c;transform:scaleX(0.9185);-webkit-text-stroke:0.45px #2a2a7c;">T</span>
<span class="t" style="left:38.77px;top:436.00px;font-size:11px;line-height:11px;color:#2a2a7c;transform:scaleX(1.1077);-webkit-text-stroke:0.45px #2a2a7c;">H</span>
<span class="t" style="left:39.25px;top:451.00px;font-size:11px;line-height:11px;color:#2a2a7c;transform:scaleX(1.0000);-webkit-text-stroke:0.45px #2a2a7c;">R</span>
<span class="t" style="left:39.26px;top:538.00px;font-size:11px;line-height:11px;color:#2a2a7c;transform:scaleX(1.0500);-webkit-text-stroke:0.45px #2a2a7c;">A</span>
<span class="t" style="left:39.57px;top:553.00px;font-size:11px;line-height:11px;color:#2a2a7c;transform:scaleX(0.9067);-webkit-text-stroke:0.45px #2a2a7c;">C</span>
<span class="t" style="left:39.57px;top:568.00px;font-size:11px;line-height:11px;color:#2a2a7c;transform:scaleX(0.9067);-webkit-text-stroke:0.45px #2a2a7c;">C</span>
<span class="t" style="left:39.90px;top:583.00px;font-size:11px;line-height:11px;color:#2a2a7c;transform:scaleX(0.9185);-webkit-text-stroke:0.45px #2a2a7c;">T</span>
<span class="t" style="left:116.50px;top:629.00px;font-size:12.2px;line-height:12.2px;color:#444;transform:scaleX(0.9925);">V_Summary</span>
<span class="t" style="left:213.20px;top:629.00px;font-size:12.2px;line-height:12.2px;color:#217346;transform:scaleX(1.0352);">V_Depart_Perform</span>
<span class="t" style="left:344.76px;top:629.00px;font-size:12.2px;line-height:12.2px;color:#444;transform:scaleX(0.9630);">T1</span>
<span class="t" style="left:382.89px;top:629.00px;font-size:12.2px;line-height:12.2px;color:#444;transform:scaleX(1.1071);">U1</span>
<span class="t" style="left:423.00px;top:629.00px;font-size:12.2px;line-height:12.2px;color:#444;transform:scaleX(1.0000);">P1</span>
<span class="t" style="left:9.85px;top:654.00px;font-size:10.8px;line-height:10.8px;color:#444;transform:scaleX(0.9967);">Ready</span>
<span class="t" style="left:1034.70px;top:654.00px;font-size:10.8px;line-height:10.8px;color:#444;transform:scaleX(1.0072);">85%</span>
<span class="t" style="left:258.20px;top:175.00px;font-size:14px;line-height:14px;color:#555;font-weight:bold;transform:scaleX(0.9043);font-family:Liberation Serif;font-style:italic;">f</span>
<span class="t" style="left:263.29px;top:178.00px;font-size:10px;line-height:10px;color:#555;font-weight:bold;transform:scaleX(1.1600);font-family:Liberation Serif;font-style:italic;">x</span>
</div></body></html>
